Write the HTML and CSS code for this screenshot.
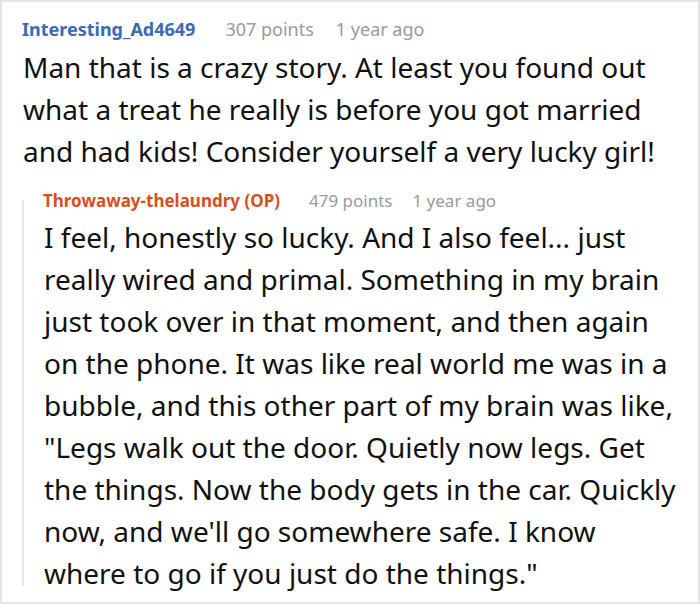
FILE: index.html
```html
<!DOCTYPE html>
<html>
<head>
<meta charset="utf-8">
<link rel="stylesheet" href="styles.css">
</head>
<body>
<div class="frame">
  <div class="comment">
    <div class="meta">
      <span class="user user-blue">Interesting_Ad4649</span>
      <span class="info">307 points</span>
      <span class="info">1 year ago</span>
    </div>
    <p class="text">Man that is a crazy story. At least you found out what a treat he really is before you got married and had kids! Consider yourself a very lucky girl!</p>
  </div>
  <div class="reply">
    <div class="rail"></div>
    <div class="reply-content">
      <div class="meta meta-reply">
        <span class="user user-op">Throwaway-thelaundry (OP)</span>
        <span class="info">479 points</span>
        <span class="info">1 year ago</span>
      </div>
      <p class="text text-reply">I feel, honestly so lucky. And I also feel... just really wired and primal. Something in my brain just took over in that moment, and then again on the phone. It was like real world me was in a bubble, and this other part of my brain was like, "Legs walk out the door. Quietly now legs. Get the things. Now the body gets in the car. Quickly now, and we'll go somewhere safe. I know where to go if you just do the things."</p>
    </div>
  </div>
</div>
</body>
</html>
```
FILE: styles.css
```css
html, body {
  margin: 0;
  padding: 0;
  background: #ffffff;
}
.frame {
  box-sizing: border-box;
  width: 700px;
  height: 604px;
  border: 2px solid #e4e4e4;
  padding: 15px 16px 0 20px;
  overflow: hidden;
  font-family: "Noto Sans", "Open Sans", sans-serif;
}
.meta {
  font-size: 18px;
  line-height: 24px;
  display: flex;
}
.meta-reply {
  font-size: 17px;
}
.user {
  font-weight: bold;
  margin-right: 30px;
}
.meta-reply .user {
  margin-right: 29px;
}
.user-blue { color: #3b69b3; }
.user-op { color: #d6501f; }
.info {
  color: #9a9a9a;
  margin-right: 22px;
}
.meta-reply .info {
  margin-right: 20px;
}
.text {
  margin: 5px 0 0 1px;
  font-size: 28px;
  line-height: 42px;
  color: #111111;
}
.reply {
  display: flex;
  margin-top: 17px;
}
.rail {
  width: 2px;
  background: #e8e8e8;
  margin-top: 11px;
  margin-bottom: 8px;
  flex: none;
}
.reply-content {
  padding-left: 19px;
}
.text-reply {
  margin-top: 3px;
}
```
